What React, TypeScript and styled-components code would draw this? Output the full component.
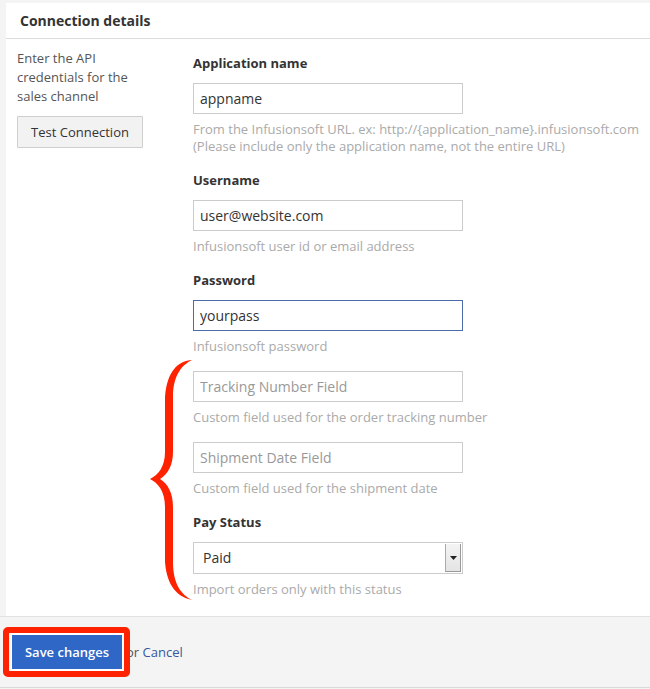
import React from "react";
import styled, { createGlobalStyle } from "styled-components";

const GlobalStyle = createGlobalStyle`
  html, body {
    margin: 0;
    padding: 0;
    background: #f4f4f4;
    font-family: "Open Sans", "Liberation Sans", sans-serif;
    color: #333;
  }
`;

const fields = [
  {
    label: "Application name",
    value: "appname",
    help: [
      "From the Infusionsoft URL. ex: http://{application_name}.infusionsoft.com",
      "(Please include only the application name, not the entire URL)",
    ],
  },
  {
    label: "Username",
    value: "user@website.com",
    help: ["Infusionsoft user id or email address"],
  },
  {
    label: "Password",
    value: "yourpass",
    focused: true,
    help: ["Infusionsoft password"],
  },
  {
    placeholder: "Tracking Number Field",
    help: ["Custom field used for the order tracking number"],
  },
  {
    placeholder: "Shipment Date Field",
    help: ["Custom field used for the shipment date"],
  },
];

const App = () => {
  return (
    <Page>
      <GlobalStyle />
      <Panel>
        <PanelHeader>Connection details</PanelHeader>
        <PanelBody>
          <SideColumn>
            <SideText>Enter the API credentials for the sales channel</SideText>
            <GrayButton>Test Connection</GrayButton>
          </SideColumn>
          <FormColumn>
            {fields.map((f, i) => (
              <FieldGroup key={i}>
                {f.label && <Label>{f.label}</Label>}
                <TextInput
                  $focused={!!f.focused}
                  defaultValue={f.value}
                  placeholder={f.placeholder}
                  readOnly
                />
                <Help>
                  {f.help.map((line, j) => (
                    <div key={j}>{line}</div>
                  ))}
                </Help>
              </FieldGroup>
            ))}
            <FieldGroup>
              <Label>Pay Status</Label>
              <SelectBox>
                <span>Paid</span>
                <SelectArrow>
                  <svg width="7" height="4" viewBox="0 0 7 4">
                    <path d="M0 0 L7 0 L3.5 4 Z" fill="#222" />
                  </svg>
                </SelectArrow>
              </SelectBox>
              <Help>
                <div>Import orders only with this status</div>
              </Help>
            </FieldGroup>
          </FormColumn>
          {/* red annotation brace */}
          <Brace width="46" height="246" viewBox="0 0 46 246">
            <path
              d="M44,3 C30,4 19,14 17,40 L17,95 C17,110 10,118 2,122 C10,126 17,134 17,150 L17,205 C19,230 30,240 44,243 C34,238 25,228 25,205 L25,150 C25,136 20,127 12,122 C20,117 25,108 25,95 L25,40 C25,18 34,8 44,3 Z"
              fill="#ff2200"
            />
          </Brace>
        </PanelBody>
      </Panel>
      <Footer>
        <SaveWrap>
          <PrimaryButton>Save changes</PrimaryButton>
          <RedFrame />
        </SaveWrap>
        <OrText>
          or <CancelLink href="#">Cancel</CancelLink>
        </OrText>
      </Footer>
    </Page>
  );
};

export default App;

const Page = styled.div`
  width: 650px;
  height: 689px;
  padding-top: 3px;
  box-sizing: border-box;
  overflow: hidden;
`;

const Panel = styled.div`
  margin-left: 6px;
  background: #fff;
`;

const PanelHeader = styled.div`
  height: 35px;
  line-height: 35px;
  padding-left: 14px;
  font-size: 14px;
  font-weight: 700;
  color: #333;
  border-bottom: 1px solid #dcdcdc;
`;

const PanelBody = styled.div`
  position: relative;
  display: flex;
  padding-bottom: 18px;
`;

const SideColumn = styled.div`
  width: 176px;
  padding: 10px 0 0 11px;
  box-sizing: border-box;
`;

const SideText = styled.div`
  width: 130px;
  font-size: 13px;
  line-height: 19px;
  color: #555;
`;

const GrayButton = styled.button`
  margin-top: 10px;
  width: 126px;
  height: 32px;
  background: #f2f2f2;
  border: 1px solid #cfcfcf;
  border-radius: 1px;
  font-family: inherit;
  font-size: 13px;
  color: #333;
  padding: 0;
`;

const FormColumn = styled.div`
  padding-top: 15px;
  flex: 1;
  display: flex;
  flex-direction: column;
  gap: 16px;
  margin-left: 11px;
`;

const FieldGroup = styled.div`
  display: flex;
  flex-direction: column;
`;

const Label = styled.div`
  font-size: 13px;
  font-weight: 700;
  line-height: 19px;
  color: #333;
  margin-bottom: 10px;
`;

const TextInput = styled.input<{ $focused: boolean }>`
  width: 270px;
  height: 31px;
  box-sizing: border-box;
  border: 1px solid ${(p) => (p.$focused ? "#4a6aa8" : "#cccccc")};
  padding: 0 6px;
  font-family: inherit;
  font-size: 14px;
  color: #333;
  outline: none;
  &::placeholder {
    color: #999;
  }
`;

const SelectBox = styled.div`
  width: 270px;
  height: 32px;
  box-sizing: border-box;
  border: 1px solid #cccccc;
  display: flex;
  align-items: stretch;
  justify-content: space-between;
  font-size: 14px;
  color: #333;
  & > span {
    padding-left: 9px;
    line-height: 30px;
  }
`;

const SelectArrow = styled.div`
  width: 14px;
  margin: 1px;
  background: linear-gradient(#f4f4f4, #e4e4e4);
  border-left: 1px solid #aaa;
  border-right: 1px solid #999;
  border-bottom: 1px solid #999;
  display: flex;
  align-items: center;
  justify-content: center;
`;

const Help = styled.div`
  margin-top: 7px;
  font-size: 13px;
  line-height: 17px;
  color: #aaa;
`;

const Brace = styled.svg`
  position: absolute;
  left: 142px;
  top: 318px;
`;

const Footer = styled.div`
  border-top: 1px solid #e2e2e2;
  border-bottom: 1px solid #dadada;
  height: 72px;
  box-sizing: border-box;
  display: flex;
  align-items: center;
  padding-left: 10px;
  background: #f4f4f4;
`;

const SaveWrap = styled.div`
  position: relative;
`;

const PrimaryButton = styled.button`
  display: block;
  width: 114px;
  height: 38px;
  border: 2px solid #fff;
  background: #2f67c6;
  color: #fff;
  font-family: inherit;
  font-size: 13px;
  font-weight: 600;
  padding: 0;
`;

const RedFrame = styled.div`
  position: absolute;
  left: -7px;
  top: -6px;
  right: -6px;
  bottom: -6px;
  border: 6px solid #ff2200;
  border-radius: 5px;
  z-index: 2;
`;

const OrText = styled.span`
  margin-left: 2px;
  font-size: 13px;
  color: #555;
`;

const CancelLink = styled.a`
  color: #36589a;
  text-decoration: none;
`;
